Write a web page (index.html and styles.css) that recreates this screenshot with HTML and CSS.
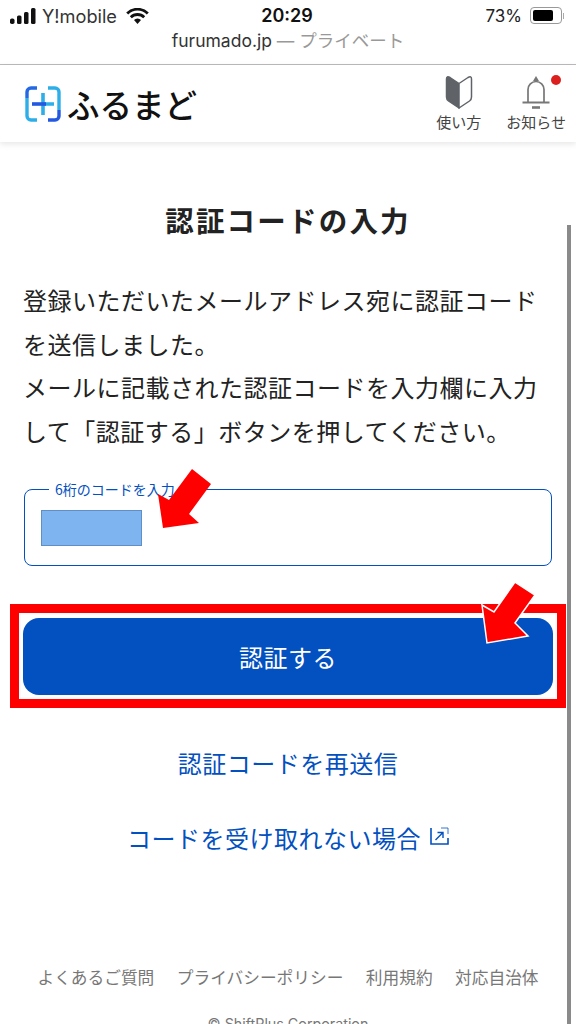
FILE: index.html
```html
<!DOCTYPE html>
<html lang="ja">
<head>
<meta charset="utf-8">
<title>認証コードの入力</title>
<link rel="stylesheet" href="styles.css">
</head>
<body>
<div class="page">
  <div class="status">
    <div class="status-left">
      <svg class="signal" width="26" height="16" viewBox="0 0 26 16"><rect x="0" y="10.500" width="4.500" height="5.500" rx="1.800"/><rect x="7" y="7.500" width="4.500" height="8.500" rx="1.500"/><rect x="14" y="4" width="4.500" height="12" rx="1.500"/><rect x="21" y="0" width="4.500" height="16" rx="1.500"/></svg>
      <span class="carrier">Y!mobile</span>
      <svg class="wifi" width="23" height="16" viewBox="0 0 23 16"><path d="M1.200 5.500a14.500 14.500 0 0 1 20.600 0M4.800 9.300a9.400 9.400 0 0 1 13.400 0" fill="none" stroke="#111" stroke-width="2.800"/><path d="M8 12a4.800 4.800 0 0 1 7 0L11.500 16z" fill="#111"/></svg>
    </div>
    <div class="clock">20:29</div>
    <div class="status-right">
      <span class="pct">73%</span>
      <span class="battery"><span class="battery-fill"></span></span>
      <span class="battery-tip"></span>
    </div>
  </div>
  <div class="urlbar"><span class="domain">furumado.jp</span><span class="private"> — プライベート</span></div>

  <header class="site-header">
    <div class="brand">
      <svg class="logo" width="36" height="36" viewBox="0 0 36 36">
        <path d="M12 2H6a4 4 0 0 0-4 4v6" fill="none" stroke="#2468e4" stroke-width="3.400"/>
        <path d="M2 12v18a4 4 0 0 0 4 4h6" fill="none" stroke="#2eaee8" stroke-width="3.400"/>
        <path d="M23 2h7a4 4 0 0 1 4 4v18" fill="none" stroke="#2eaee8" stroke-width="3.400"/>
        <path d="M34 24v6a4 4 0 0 1-4 4h-7" fill="none" stroke="#2458e0" stroke-width="3.400"/>
        <path d="M18 18h11M18 7v22" stroke="#2eaee8" stroke-width="3.600" fill="none"/>
        <path d="M7 18h14" stroke="#2458e0" stroke-width="3.600" fill="none"/>
      </svg>
      <span class="brand-name">ふるまど</span>
    </div>
    <nav class="header-nav">
      <a class="nav-item nav-guide">
        <svg width="28" height="34" viewBox="0 0 28 34"><path d="M14 8.500L5 2.500Q1.500 0.500 1.500 4V22Q1.500 24.500 3.500 26L14 33z" fill="#5f6368" stroke="#5f6368" stroke-width="1.500" stroke-linejoin="round"/><path d="M14 8.500L23 2.500Q26.500 0.500 26.500 4V22Q26.500 24.500 24.500 26L14 33z" fill="#fff" stroke="#5f6368" stroke-width="1.500" stroke-linejoin="round"/></svg>
        <span>使い方</span>
      </a>
      <a class="nav-item nav-bell">
        <svg width="28" height="34" viewBox="0 0 28 34"><path d="M6 27V14.500a8 8 0 0 1 16 0V27" fill="none" stroke="#777" stroke-width="1.700"/><path d="M11 6L14 1 17 6z" fill="#777"/><path d="M0.500 27.500h27" stroke="#777" stroke-width="2"/><path d="M10 32.500h8" stroke="#777" stroke-width="2.600"/></svg>
        <i class="badge"></i>
        <span>お知らせ</span>
      </a>
    </nav>
  </header>

  <main class="content">
    <h1>認証コードの入力</h1>
    <p class="lead">登録いただいたメールアドレス宛に認証コードを送信しました。<br>メールに記載された認証コードを入力欄に入力して「認証する」ボタンを押してください。</p>

    <fieldset class="field">
      <legend>6桁のコードを入力</legend>
      <div class="mask"></div>
      <svg class="arrow arrow-input" width="54" height="60" viewBox="0 0 54 60"><path d="M34 0L53 15 31 45 41 54 5 59 0 25 11 31z" fill="#f00"/></svg>
    </fieldset>

    <div class="highlight">
      <button class="submit" type="button">認証する</button>
      <svg class="arrow arrow-submit" width="56" height="64" viewBox="0 0 56 64"><path d="M34 1L54 14 34 42 47 55 6 62 1 24 13 31z" fill="#f00" stroke="#fff" stroke-width="1.500"/></svg>
    </div>

    <a class="link link-resend">認証コードを再送信</a>
    <a class="link link-help">コードを受け取れない場合<svg class="ext" width="19" height="18" viewBox="0 0 19 18"><path d="M1 1V17H18V11" fill="none" stroke="#0350c0" stroke-width="1.600"/><path d="M5.500 13L12.500 6M7.500 5.500h5.500v5.500" fill="none" stroke="#0350c0" stroke-width="1.400"/><path d="M11 1H18V7" fill="none" stroke="#0350c0" stroke-width="0.800"/></svg></a>
  </main>

  <footer class="site-footer">
    <ul class="footer-links">
      <li>よくあるご質問</li>
      <li>プライバシーポリシー</li>
      <li>利用規約</li>
      <li>対応自治体</li>
    </ul>
    <p class="copy">© ShiftPlus Corporation</p>
  </footer>
  <div class="scrollbar"></div>
</div>
</body>
</html>
```
FILE: styles.css
```css
* { box-sizing: border-box; }
html, body { margin: 0; padding: 0; height: 1024px; overflow: hidden; background: #fff; }
body { font-family: "Noto Sans CJK JP", "Noto Sans", sans-serif; color: #1a1a1a; }
.page { position: relative; width: 576px; height: 1024px; overflow: hidden; }

.status { display: grid; grid-template-columns: 1fr auto 1fr; align-items: center; height: 30px; padding: 1px 12px 0 10px; font-family: "Inter", "Liberation Sans", sans-serif; font-size: 17px; color: #222; }
.status-left { display: flex; align-items: center; gap: 6px; }
.carrier { font-size: 18.200px; color: #333; }
.signal { fill: #111; }
.wifi { margin-left: 3px; }
.clock { font-weight: 600; font-size: 18px; color: #111; }
.status-right { display: flex; align-items: center; justify-content: flex-end; gap: 8px; }
.pct { font-size: 17px; }
.battery { display: block; width: 32px; height: 17px; padding: 2px; border: 1px solid #999; border-radius: 4px; }
.battery-fill { display: block; width: 20px; height: 100%; background: #000; border-radius: 2px; }
.battery-tip { display: block; width: 1px; height: 6px; margin-left: -7px; background: #aaa; }

.urlbar { height: 35px; text-align: center; font-size: 17.500px; line-height: 22px; border-bottom: 1px solid #bbb; font-family: "Inter", "Noto Sans CJK JP", sans-serif; }
.domain { color: #333; }
.private { color: #999; }

.site-header { display: flex; justify-content: space-between; height: 77px; padding: 10px 10px 0 25px; background: #fff; box-shadow: 0 2px 6px rgba(0,0,0,.1); position: relative; }
.brand { display: flex; align-items: center; gap: 6px; height: 58px; }
.logo { display: block; }
.brand-name { font-size: 32.500px; font-weight: 500; line-height: 1; color: #111; }
.header-nav { display: flex; gap: 25px; }
.nav-item { position: relative; display: flex; flex-direction: column; align-items: center; font-size: 15px; line-height: 18px; color: #444; gap: 4px; }
.nav-item svg { display: block; }
.badge { position: absolute; top: 0; right: 5px; width: 10px; height: 10px; border-radius: 50%; background: #dc2020; }

.content { display: flex; flex-direction: column; padding: 0 24px; }
h1 { margin: 58px 0 0; text-align: center; font-size: 28.500px; line-height: 40px; font-weight: 700; letter-spacing: 2.200px; color: #222; }
.lead { margin: 38px 0 0 -1px; font-size: 24px; line-height: 43.500px; letter-spacing: .5px; color: #222; }

.field { position: relative; margin: 29px 0 0; padding: 0 16px; height: 85px; border: 1.500px solid #0350c0; border-radius: 8px; }
.field legend { padding: 0 6px; margin-left: 8px; font-size: 14px; line-height: 16px; color: #0350c0; }
.mask { width: 101px; height: 36px; margin-top: 13px; background: #7eb4ef; border: 1.500px solid #5f8fc4; }
.arrow { position: absolute; }
.arrow-input { left: 133px; top: -28px; }

.highlight { position: relative; margin: 38px -14px 0; padding: 5px 4px 4px; border: 9px solid #f00; }
.submit { display: block; width: 100%; height: 77px; border: 0; border-radius: 16px; background: #0350c0; color: #fff; font: 24px/1 "Noto Sans CJK JP", sans-serif; letter-spacing: .5px; }
.arrow-submit { right: 20px; top: -32px; }

.link { display: block; text-align: center; font-size: 24px; line-height: 36px; letter-spacing: .5px; color: #0350c0; }
.link-resend { margin-top: 37px; }
.link-help { margin-top: 39px; }
.ext { margin-left: 9px; vertical-align: 3px; }

.site-footer { position: absolute; left: 0; right: 0; top: 963px; font-size: 16.700px; color: #777; }
.footer-links { display: flex; justify-content: center; gap: 22.500px; margin: 0; padding: 0; list-style: none; line-height: 28px; }
.copy { margin: 23px 0 0; text-align: center; font-family: "Inter", sans-serif; font-size: 14.300px; line-height: 20px; }

.scrollbar { position: absolute; right: 5px; top: 225px; bottom: 0; width: 4px; background: #8a8a8a; }
```
